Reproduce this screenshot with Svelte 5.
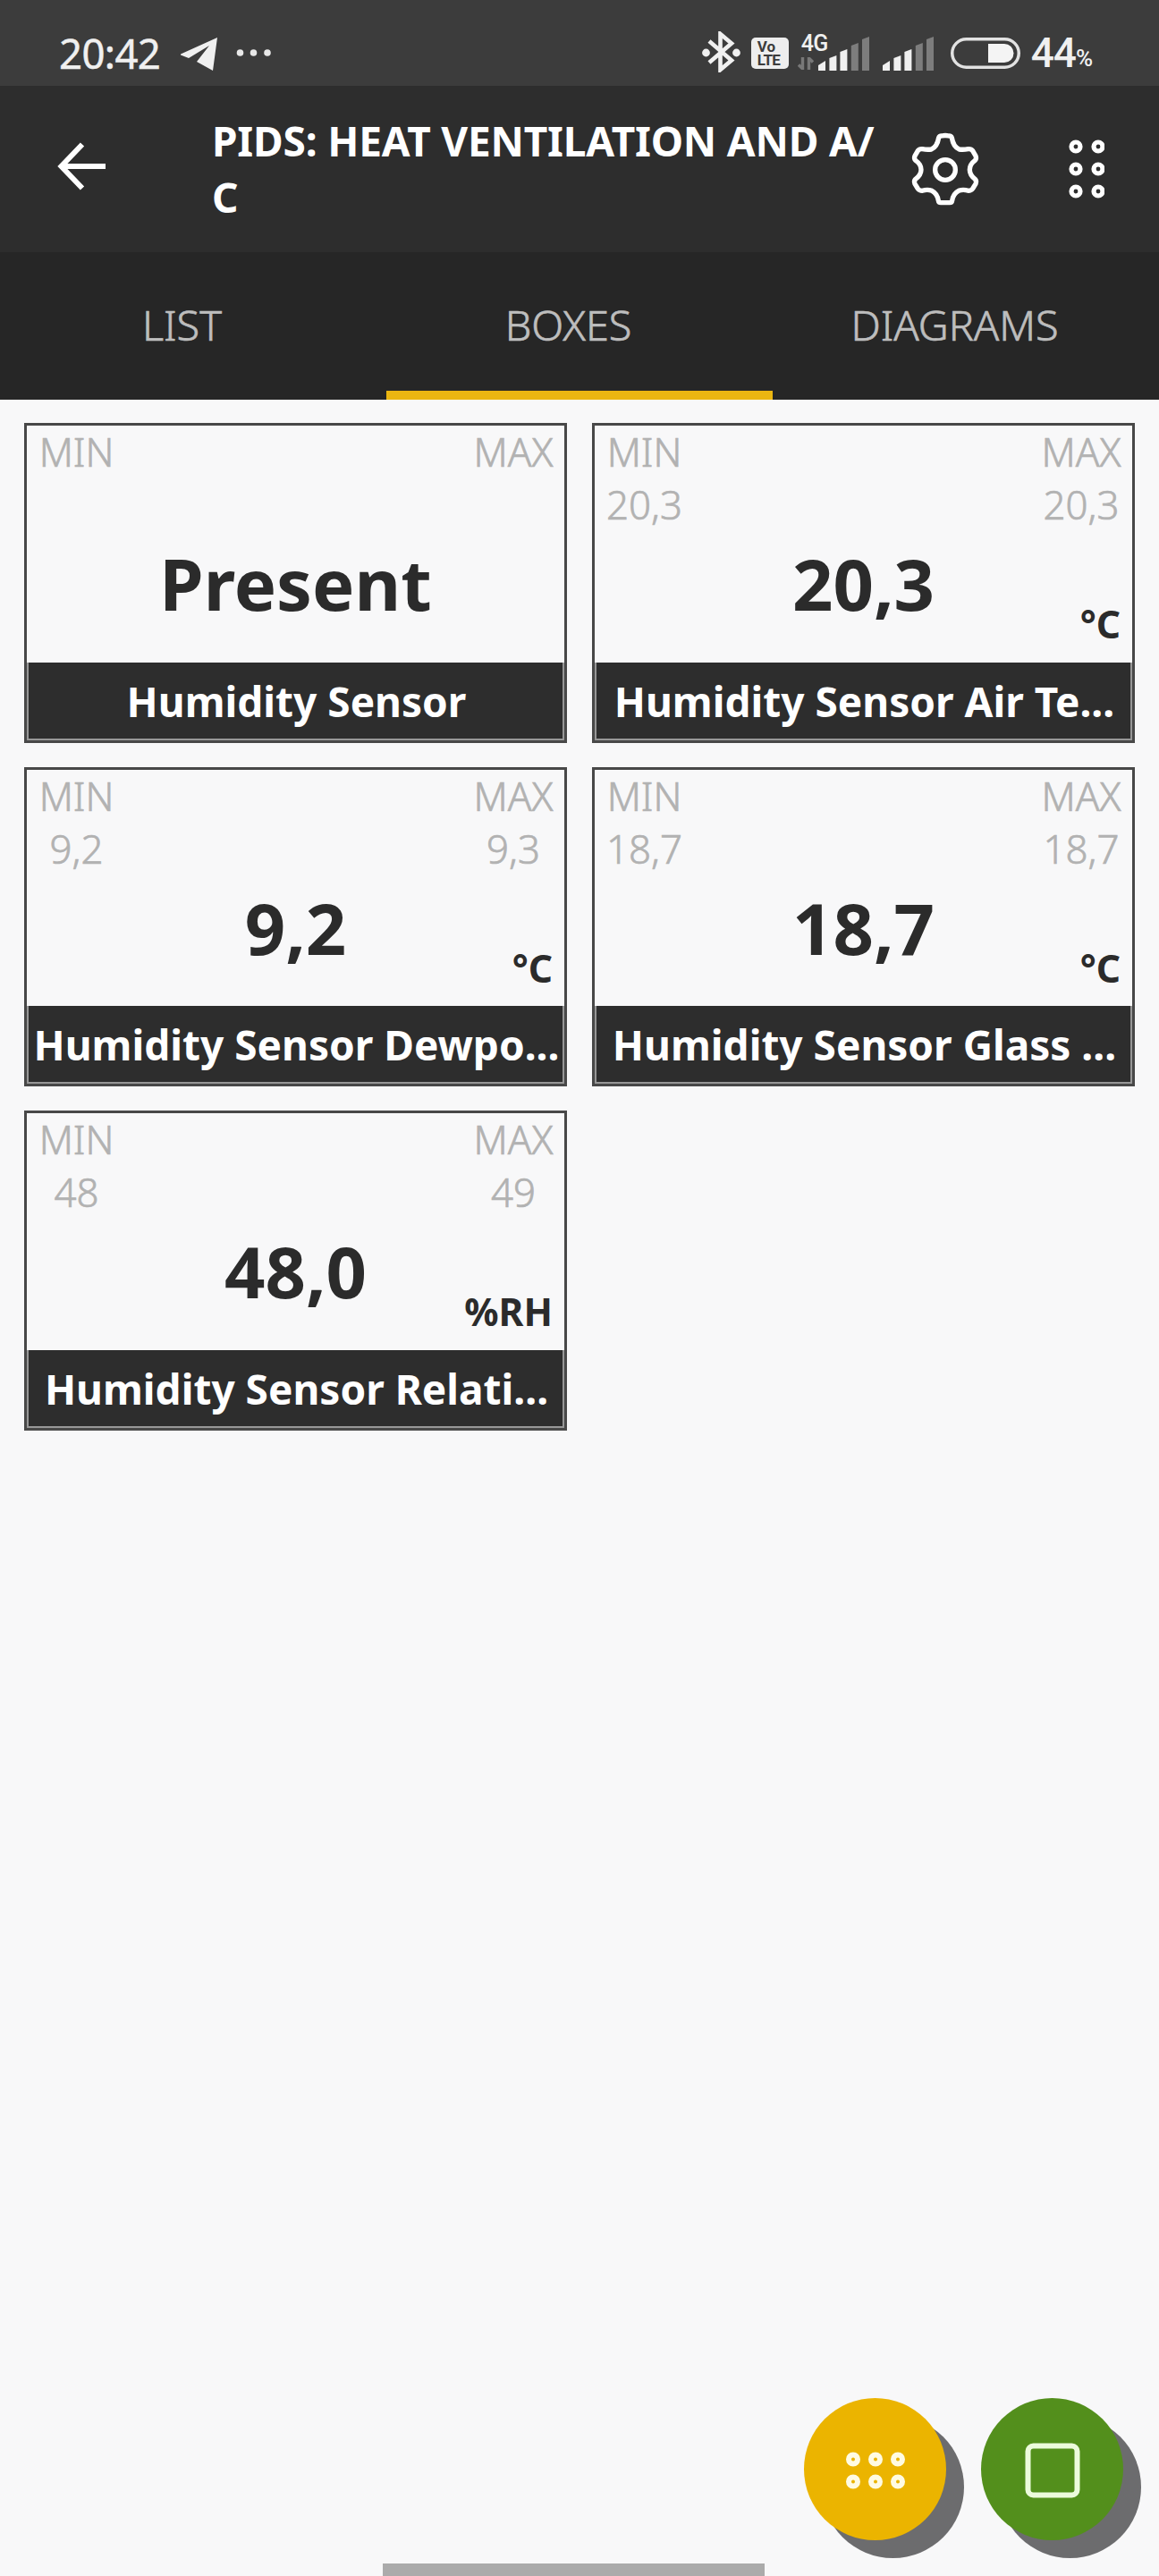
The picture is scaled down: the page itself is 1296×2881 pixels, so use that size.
<script>
  const tabs = ['LIST', 'BOXES', 'DIAGRAMS'];
  const active = 'BOXES';

  const boxes = [
    { name: 'Humidity Sensor', value: 'Present', min: '', max: '', unit: '' },
    { name: 'Humidity Sensor Air Te...', value: '20,3', min: '20,3', max: '20,3', unit: '°C' },
    { name: 'Humidity Sensor Dewpo...', value: '9,2', min: '9,2', max: '9,3', unit: '°C' },
    { name: 'Humidity Sensor Glass ...', value: '18,7', min: '18,7', max: '18,7', unit: '°C' },
    { name: 'Humidity Sensor Relati...', value: '48,0', min: '48', max: '49', unit: '%RH' }
  ];

  const bars = [
    { x: 0, h: 11, on: true },
    { x: 12.4, h: 17, on: true },
    { x: 24.4, h: 24, on: true },
    { x: 36.8, h: 31, on: false },
    { x: 49, h: 38, on: false }
  ];
</script>

{#snippet signal()}
  <svg class="signal" viewBox="0 0 58 38">
    {#each bars as b, i}
      {#if i === 0}
        <path d="M0 38V32L8 27V38Z" fill="#f0f0f0" />
      {:else}
        <path
          d="M{b.x} 38V{38 - b.h + 3}L{b.x + 8} {38 - b.h}V38Z"
          fill={b.on ? '#f0f0f0' : '#7d7d7d'}
        />
      {/if}
    {/each}
  </svg>
{/snippet}

<div class="screen">
  <div class="status">
    <span class="clock">20:42</span>
    <svg class="plane" viewBox="0 0 41 37"><path d="M0 18.5L41 0L36 37L18 27L32 9L9 23L0 19.5Z" fill="#f0f0f0" /></svg>
    <svg class="more" viewBox="0 0 40 8">
      <circle cx="4.5" cy="4" r="3.8" /><circle cx="19.5" cy="4" r="3.8" /><circle cx="35" cy="4" r="3.8" />
    </svg>
    <div class="tray">
      <svg class="bt" viewBox="0 0 43 46">
        <path d="M8 11L33 32.5L20.5 43V3L33 13.5L8 35" fill="none" stroke="#f0f0f0" stroke-width="4.6" />
        <circle cx="4.5" cy="24" r="4.4" fill="#f0f0f0" /><circle cx="38.5" cy="24" r="4.4" fill="#f0f0f0" />
      </svg>
      <div class="volte"><span>Vo</span><span>LTE</span></div>
      <div class="net">
        <span>4G</span>
        <svg viewBox="0 0 18 14">
          <path d="M5.5 0V13M1 8.5L5.5 13V8M12.5 14V1M17 5.5L12.5 1V6" fill="none" stroke="#787878" stroke-width="3.4" />
        </svg>
      </div>
      {@render signal()}
      <div class="second">{@render signal()}</div>
      <svg class="battery" viewBox="0 0 78 35">
        <rect x="1.75" y="1.75" width="74.5" height="31.5" rx="15.75" fill="none" stroke="#e2e2e2" stroke-width="3.5" />
        <path d="M42 7H60A10.5 10.5 0 0 1 60 28H42Z" fill="#f4f4f4" />
      </svg>
      <span class="pct">44</span><span class="sign">%</span>
    </div>
  </div>

  <header>
    <svg class="back" viewBox="0 0 54 54">
      <path d="M54 27H5M28 2.5L4.5 27L28 51.5" fill="none" stroke="#fff" stroke-width="6" />
    </svg>
    <h1>PIDS: HEAT VENTILATION AND A/<br />C</h1>
    <svg class="gear" viewBox="355 135 240 260">
      <path
        d="M453 159Q455 153 463 153Q475 150 487 153Q495 153 497 159Q502 190 522 198Q535 200 552 197Q562 196 567 203L577 220Q581 228 575 235Q557 248 557 266Q557 284 575 298Q581 305 577 314L567 330Q562 337 552 337Q535 331 520 337Q502 346 498 370Q497 377 490 377H460Q453 377 452 370Q448 346 430 337Q415 331 398 337Q388 337 383 330L373 314Q369 305 375 298Q394 284 394 266Q394 248 375 235Q369 228 373 220L383 203Q388 196 398 197Q415 200 428 198Q448 190 453 159Z"
        fill="none" stroke="#fff" stroke-width="16" stroke-linejoin="round"
      />
      <circle cx="475" cy="267" r="34" fill="none" stroke="#fff" stroke-width="16" />
    </svg>
    <svg class="menu" viewBox="0 0 40 66">
      {#each [8, 33] as x}
        {#each [8, 33, 58] as y}
          <circle cx={x} cy={y} r="5" fill="none" stroke="#fff" stroke-width="5.2" />
        {/each}
      {/each}
    </svg>
  </header>

  <nav>
    {#each tabs as tab}
      <div class="tab" class:active={tab === active}>{tab}</div>
    {/each}
  </nav>

  <main>
    {#each boxes as box}
      <section class="box">
        <div class="body">
          <div class="limit left"><span>MIN</span><span>{box.min}</span></div>
          <div class="value">{box.value}</div>
          <div class="limit right"><span>MAX</span><span>{box.max}</span></div>
          <div class="unit">{box.unit}</div>
        </div>
        <div class="name">{box.name}</div>
      </section>
    {/each}
  </main>

  <div class="actions">
    <div class="fab yellow">
      <svg class="grid" viewBox="0 0 66 42">
        {#each [8, 33, 58] as x}
          {#each [8.5, 33.5] as y}
            <circle cx={x} cy={y} r="5" fill="none" stroke="#fffbe2" stroke-width="6" />
          {/each}
        {/each}
      </svg>
    </div>
    <div class="fab green">
      <svg class="square" viewBox="0 0 62 62">
        <rect x="3.5" y="3.5" width="55" height="55" rx="6" fill="none" stroke="#ecfbdc" stroke-width="6" />
      </svg>
    </div>
  </div>
  <div class="handle"></div>
</div>

<style>
  :global(body) {
    margin: 0;
    background: #f8f8f9;
  }
  .screen {
    width: 1296px;
    height: 2881px;
    display: flex;
    flex-direction: column;
    overflow: hidden;
    background: #f8f8f9;
    color: #2b2b2b;
    font-family: 'Noto Sans', 'Open Sans', sans-serif;
  }
  svg {
    display: block;
    flex: none;
  }

  .status {
    height: 96px;
    flex: none;
    box-sizing: border-box;
    padding: 24px 74px 0 66px;
    display: flex;
    align-items: flex-start;
    background: #3c3c3c;
    color: #f0f0f0;
  }
  .clock {
    width: 136px;
    font-size: 45.5px;
    line-height: 70px;
    letter-spacing: -0.6px;
    -webkit-text-stroke: 0.5px #f0f0f0;
  }
  .plane { width: 41px; height: 37px; margin-top: 18px; }
  .more { width: 40px; height: 8px; margin: 31px 0 0 21px; fill: #e8e8e8; }
  .tray {
    flex: 1;
    display: flex;
    justify-content: flex-end;
    align-items: flex-start;
  }
  .bt { width: 43px; height: 46px; margin-top: 11px; }
  .volte {
    width: 42px;
    height: 35px;
    margin: 18px 0 0 12px;
    box-sizing: border-box;
    padding: 3px 0 0 7px;
    border-radius: 5px;
    background: #eee;
    color: #3c3c3c;
    font: 700 17px/15px Roboto, sans-serif;
    display: flex;
    flex-direction: column;
  }
  .volte span:last-child { letter-spacing: -0.6px; }
  .net {
    width: 34px;
    margin: 12px -11px 0 10px;
    font: 500 25px/40px Roboto, sans-serif;
  }
  .net span {
    display: block;
    height: 28px;
    margin-left: 4px;
    line-height: 23px;
    padding-top: 1px;
    box-sizing: border-box;
    letter-spacing: -0.6px;
  }
  .net svg { width: 18px; height: 14px; }
  .signal { width: 58px; height: 38px; margin-top: 17px; }
  .second { margin-left: 14px; }
  .battery { width: 78px; height: 35px; margin: 18px 12px 0 18px; }
  .pct { font: 500 46px/70px Roboto, sans-serif; letter-spacing: -1px; }
  .sign { font: 500 26px/83px Roboto, sans-serif; width: 19px; letter-spacing: -1px; }

  header {
    height: 186px;
    flex: none;
    display: flex;
    align-items: center;
    background: #2d2d2d;
  }
  .back { width: 54px; height: 54px; margin: -6px 119px 0 64px; }
  h1 {
    width: 776px;
    margin: 0 0 1px;
    color: #fff;
    font-size: 46px;
    font-weight: 700;
    line-height: 62.5px;
    letter-spacing: -0.2px;
    white-space: nowrap;
  }
  .gear { width: 80px; height: 86.66px; margin-left: 4px; }
  .menu { width: 40px; height: 66px; margin-left: 98px; }

  nav {
    height: 165px;
    flex: none;
    display: grid;
    grid-template-columns: repeat(3, 1fr);
    background: #262626;
  }
  .tab {
    box-sizing: border-box;
    height: 165px;
    padding: 0 25px 0 0;
    border-bottom: 10px solid transparent;
    color: #bdbdbd;
    font-size: 46.8px;
    font-weight: 300;
    line-height: 162px;
    text-align: center;
    -webkit-text-stroke: 0.7px #bdbdbd;
  }
  .tab.active { border-color: #ebb611; }

  main {
    padding: 26px 27px 0;
    display: grid;
    grid-template-columns: 607px 607px;
    grid-auto-rows: 357.5px;
    gap: 27px 28px;
  }
  .box {
    box-sizing: border-box;
    border: 3px solid #484848;
    display: flex;
    flex-direction: column;
  }
  .body {
    flex: 1;
    display: grid;
    grid-template-columns: 111px 1fr 114px;
    grid-template-rows: 176px 1fr;
  }
  .limit {
    grid-row: 1;
    color: #b2b2b2;
    font-size: 43.8px;
    font-weight: 300;
    line-height: 59px;
    text-align: center;
    display: flex;
    flex-direction: column;
    -webkit-text-stroke: 0.7px #b2b2b2;
  }
  .limit.left { grid-column: 1; }
  .limit.right { grid-column: 3; }
  .value {
    grid-column: 1 / 4;
    grid-row: 1 / 3;
    padding-top: 122px;
    font-size: 79.5px;
    font-weight: 700;
    line-height: 109px;
    white-space: nowrap;
    display: flex;
    justify-content: center;
  }
  .unit {
    grid-column: 2 / 4;
    grid-row: 2;
    padding: 18px 13px 0 0;
    font-size: 42.5px;
    font-weight: 700;
    line-height: 56px;
    text-align: right;
  }
  .name {
    height: 85px;
    flex: none;
    padding-left: 2px;
    border: 2px solid #979797;
    border-top: 0;
    background: #2d2d2d;
    color: #fff;
    font-size: 46px;
    font-weight: 700;
    line-height: 87px;
    text-align: center;
    white-space: nowrap;
  }

  .actions {
    margin-top: auto;
    padding: 0 40px 26px 0;
    display: flex;
    justify-content: flex-end;
    gap: 39px;
  }
  .fab {
    width: 159px;
    height: 159px;
    border-radius: 50%;
    display: flex;
    align-items: center;
    justify-content: center;
    box-shadow: 20px 20px 0 #6c6c6e;
  }
  .yellow { background: #ebb400; }
  .green { background: #538f1c; }
  .grid { width: 66px; height: 42px; margin-top: 2px; }
  .square { width: 62px; height: 62px; margin-top: 2px; }
  .handle {
    width: 427px;
    height: 14px;
    flex: none;
    margin-left: 428px;
    background: #ababab;
  }
</style>
